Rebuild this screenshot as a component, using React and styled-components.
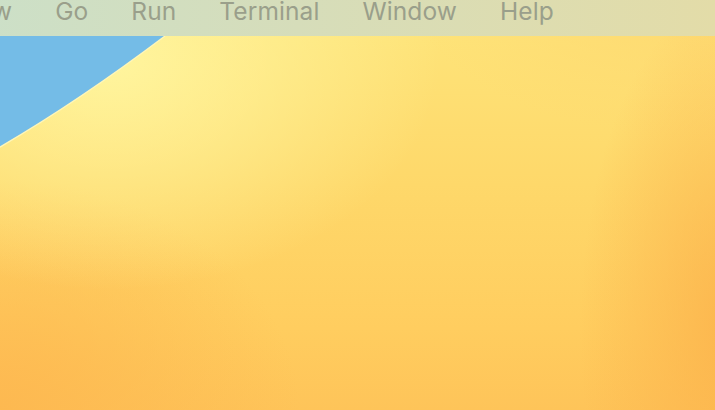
import React from "react"
import styled, { createGlobalStyle } from "styled-components"

const GlobalStyle = createGlobalStyle`
  html, body {
    margin: 0;
    padding: 0;
    overflow: hidden;
  }
  body {
    font-family: Inter, "Open Sans", "Liberation Sans", sans-serif;
  }
`

const Screen = styled.div`
  position: relative;
  width: 715px;
  height: 410px;
  overflow: hidden;
  display: flex;
  flex-direction: column;
  background:
    radial-gradient(ellipse 330px 230px at 110px 60px, rgba(255, 246, 160, 0.95), rgba(255, 240, 150, 0) 100%),
    radial-gradient(ellipse 300px 230px at 0px 410px, rgba(253, 184, 80, 0.95), rgba(253, 184, 80, 0) 100%),
    radial-gradient(ellipse 150px 330px at 730px 330px, rgba(252, 180, 76, 0.9), rgba(252, 180, 76, 0) 100%),
    radial-gradient(ellipse 300px 140px at 715px 0px, rgba(254, 214, 110, 0.8), rgba(254, 214, 110, 0) 100%),
    linear-gradient(180deg, #fee67c 0%, #fed86a 45%, #ffcd5f 80%, #fec459 100%);
`

const Wallpaper = styled.svg`
  position: absolute;
  top: 0;
  left: 0;
  width: 715px;
  height: 410px;
`

const MenuBar = styled.div`
  position: relative;
  z-index: 1;
  height: 36px;
  flex: 0 0 36px;
  display: flex;
  align-items: flex-start;
  gap: 43px;
  margin-left: -45px;
  background: linear-gradient(90deg, #cbe0c9 0%, #d6ddba 45%, #e3dca8 100%);
`

const MenuItem = styled.span`
  font-size: 24.5px;
  line-height: 24px;
  margin-top: -1px;
  color: #9a9f8b;
  letter-spacing: 0.1px;
  white-space: nowrap;
`

const items = ["View", "Go", "Run", "Terminal", "Window", "Help"]

const App = () => {
  return (
    <>
      <GlobalStyle />
      <Screen>
        <Wallpaper viewBox="0 0 715 410">
          <path d="M0 0 L180 0 L165 36 C120 70 60 112 0 147 Z" fill="#74bce7" />
          <path d="M165 36 C120 70 60 112 0 147" stroke="#fff6b8" strokeWidth="1.5" fill="none" />
        </Wallpaper>
        <MenuBar>
          {items.map(item => (
            <MenuItem key={item}>{item}</MenuItem>
          ))}
        </MenuBar>
      </Screen>
    </>
  )
}

export default App
